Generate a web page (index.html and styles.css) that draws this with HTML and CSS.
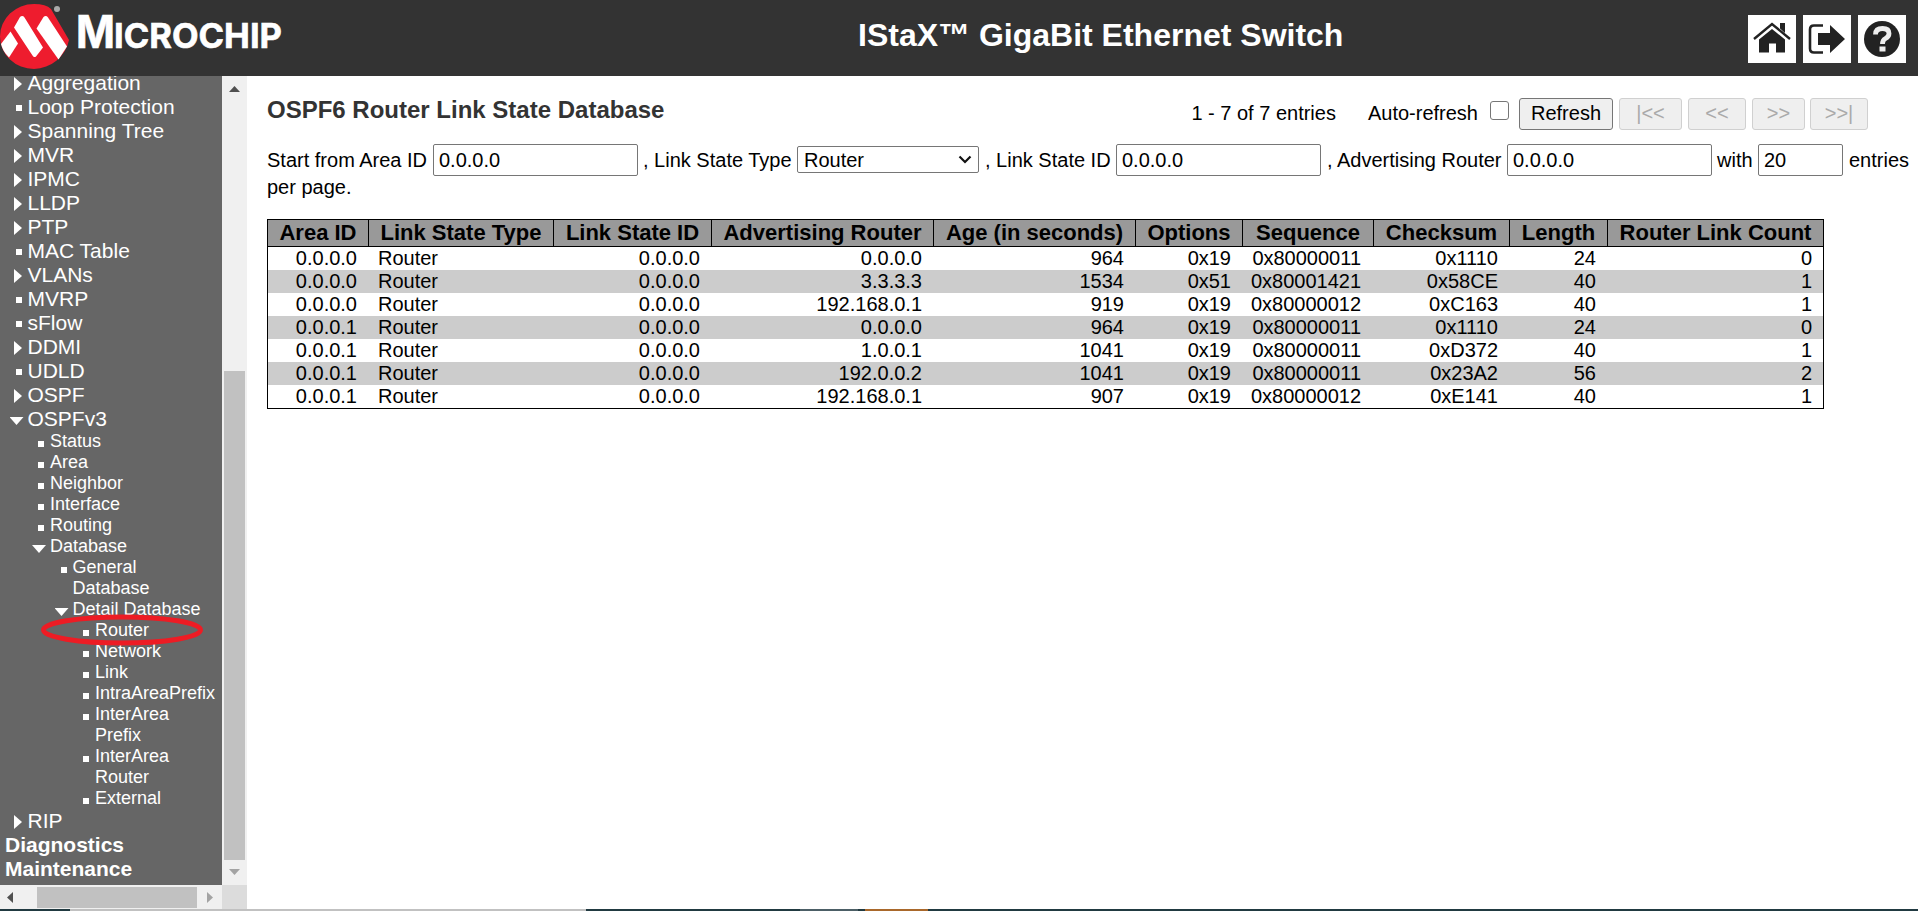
FILE: index.html
```html
<!DOCTYPE html>
<html lang="en">
<head>
<meta charset="utf-8">
<title>IStaX GigaBit Ethernet Switch</title>
<link rel="stylesheet" href="styles.css">
</head>
<body>
<header class="top">
  <div class="brand">
    <svg class="mark" width="70" height="72" viewBox="0 0 70 72">
      <path d="M34 4 A34 32.500 0 0 0 34 69 A37 36 0 0 0 69 40 L51 9 Q46 4 34 4 Z" fill="#ee1c2e"/>
      <path d="M10.500 31.500 L18 43.500 L9 57.500 Q2.500 51 1 44 Z" fill="#fff"/>
      <path d="M20 17 Q22.500 15 24.500 17.500 L43 47.500 L36 56.500 Q34 58 32.500 55.500 L14 27.500 Z" fill="#fff"/>
      <path d="M43.500 17 Q46 15 48 17.500 L67 46.500 L58.500 59.500 L36.500 28.500 Z" fill="#fff"/>
      <circle cx="57" cy="9" r="3" fill="#aaa"/>
    </svg>
    <svg class="wordmark" width="212" height="74" viewBox="0 0 212 74">
      <text class="word" x="-1" y="48" textLength="39" lengthAdjust="spacingAndGlyphs" font-size="45">M</text>
      <text class="word" x="37" y="48" textLength="168" lengthAdjust="spacingAndGlyphs" font-size="34">ICROCHIP</text>
    </svg>
  </div>
  <h1 class="product">IStaX™ GigaBit Ethernet Switch</h1>
  <div class="tools">
    <a class="tool"><svg width="48" height="48" viewBox="0 0 48 48"><path d="M32 8h5v10l-5-4.500z" fill="#222"/><path d="M6 24 24 9l18 15" fill="none" stroke="#222" stroke-width="2.400"/><path d="M11 24.500 24 14 37 24.500V37.500h-9v-9h-7v9H11z" fill="#222"/></svg></a>
    <a class="tool"><svg width="48" height="48" viewBox="0 0 48 48"><path d="M20 10.500h-9q-4 0-4 4v19q0 4 4 4h9" fill="none" stroke="#222" stroke-width="2.600"/><path d="M15 18h12V10l15 14-15 14v-8H15z" fill="#222"/></svg></a>
    <a class="tool"><svg width="48" height="48" viewBox="0 0 48 48"><circle cx="24" cy="24" r="18" fill="#222"/><path d="M17.500 19.500q0-6 7-6 6.500 0 6.500 5 0 3-3.500 5-3 1.700-3 5.500" fill="none" stroke="#eee" stroke-width="4.800"/><path d="M21.500 31.500h6v5h-6z" fill="#eee"/></svg></a>
  </div>
</header>
<div class="body">
  <div class="side">
    <nav class="menu">
      <ul class="l1">
        <li class="shut">Aggregation</li>
        <li class="leaf">Loop Protection</li>
        <li class="shut">Spanning Tree</li>
        <li class="shut">MVR</li>
        <li class="shut">IPMC</li>
        <li class="shut">LLDP</li>
        <li class="shut">PTP</li>
        <li class="leaf">MAC Table</li>
        <li class="shut">VLANs</li>
        <li class="leaf">MVRP</li>
        <li class="leaf">sFlow</li>
        <li class="shut">DDMI</li>
        <li class="leaf">UDLD</li>
        <li class="shut">OSPF</li>
        <li class="open">OSPFv3
          <ul class="sub">
            <li class="leaf">Status</li>
            <li class="leaf">Area</li>
            <li class="leaf">Neighbor</li>
            <li class="leaf">Interface</li>
            <li class="leaf">Routing</li>
            <li class="open">Database
              <ul class="sub">
                <li class="leaf">General<br>Database</li>
                <li class="open">Detail Database
                  <ul class="sub">
                    <li class="leaf">Router
                      <svg class="ring" width="164" height="34" viewBox="0 0 164 34"><ellipse cx="82" cy="17" rx="78.500" ry="13" fill="none" stroke="#ed1c24" stroke-width="5"/></svg>
                    </li>
                    <li class="leaf">Network</li>
                    <li class="leaf">Link</li>
                    <li class="leaf">IntraAreaPrefix</li>
                    <li class="leaf">InterArea<br>Prefix</li>
                    <li class="leaf">InterArea<br>Router</li>
                    <li class="leaf">External</li>
                  </ul>
                </li>
              </ul>
            </li>
          </ul>
        </li>
        <li class="shut">RIP</li>
      </ul>
      <div class="group">Diagnostics</div>
      <div class="group">Maintenance</div>
    </nav>
    <div class="vbar">
      <svg width="25" height="25" viewBox="0 0 25 25"><path d="M7 16h11l-5.500-6z" fill="#505050"/></svg>
      <div class="vthumb"></div>
      <svg width="25" height="25" viewBox="0 0 25 25"><path d="M7 9h11l-5.500 6z" fill="#a3a3a3"/></svg>
    </div>
    <div class="hbar">
      <svg width="25" height="24" viewBox="0 0 25 24"><path d="M13 7v11l-6-5.500z" fill="#505050"/></svg>
      <div class="hthumb"></div>
      <svg width="25" height="24" viewBox="0 0 25 24"><path d="M10 7v11l6-5.500z" fill="#a3a3a3"/></svg>
    </div>
    <div class="corner"></div>
  </div>
  <main class="main">
    <div class="headrow">
      <h2 class="title">OSPF6 Router Link State Database</h2>
      <div class="actions">
        <span class="count">1 - 7 of 7 entries</span>
        <label class="auto" for="auto">Auto-refresh</label>
        <input class="check" id="auto" type="checkbox">
        <button class="btn w94">Refresh</button>
        <button class="btn w63" disabled>|&lt;&lt;</button>
        <button class="btn w58" disabled>&lt;&lt;</button>
        <button class="btn w53" disabled>&gt;&gt;</button>
        <button class="btn w58 last" disabled>&gt;&gt;|</button>
      </div>
    </div>
    <div class="filter">
      <span class="f1">Start from Area ID</span><input class="field" value="0.0.0.0">
      <span class="f2">, Link State Type</span><span class="select">Router<svg width="14" height="10" viewBox="0 0 14 10"><path d="M1.500 1.500 7 7l5.500-5.500" fill="none" stroke="#111" stroke-width="2.200"/></svg></span>
      <span class="f3">, Link State ID</span><input class="field" value="0.0.0.0">
      <span class="f4">, Advertising Router</span><input class="field" value="0.0.0.0">
      <span class="f5">with</span><input class="field short" value="20">
      <span class="f6">entries</span>
    </div>
    <div class="perpage">per page.</div>
    <table class="db">
      <colgroup><col style="width:101px"><col style="width:185px"><col style="width:158px"><col style="width:222px"><col style="width:202px"><col style="width:107px"><col style="width:131px"><col style="width:136px"><col style="width:98px"><col style="width:215px"></colgroup>
      <thead><tr><th>Area ID</th><th>Link State Type</th><th>Link State ID</th><th>Advertising Router</th><th>Age (in seconds)</th><th>Options</th><th>Sequence</th><th>Checksum</th><th>Length</th><th>Router Link Count</th></tr></thead>
      <tbody>
        <tr><td>0.0.0.0</td><td class="txt">Router</td><td>0.0.0.0</td><td>0.0.0.0</td><td>964</td><td>0x19</td><td>0x80000011</td><td>0x1110</td><td>24</td><td>0</td></tr>
        <tr><td>0.0.0.0</td><td class="txt">Router</td><td>0.0.0.0</td><td>3.3.3.3</td><td>1534</td><td>0x51</td><td>0x80001421</td><td>0x58CE</td><td>40</td><td>1</td></tr>
        <tr><td>0.0.0.0</td><td class="txt">Router</td><td>0.0.0.0</td><td>192.168.0.1</td><td>919</td><td>0x19</td><td>0x80000012</td><td>0xC163</td><td>40</td><td>1</td></tr>
        <tr><td>0.0.0.1</td><td class="txt">Router</td><td>0.0.0.0</td><td>0.0.0.0</td><td>964</td><td>0x19</td><td>0x80000011</td><td>0x1110</td><td>24</td><td>0</td></tr>
        <tr><td>0.0.0.1</td><td class="txt">Router</td><td>0.0.0.0</td><td>1.0.0.1</td><td>1041</td><td>0x19</td><td>0x80000011</td><td>0xD372</td><td>40</td><td>1</td></tr>
        <tr><td>0.0.0.1</td><td class="txt">Router</td><td>0.0.0.0</td><td>192.0.0.2</td><td>1041</td><td>0x19</td><td>0x80000011</td><td>0x23A2</td><td>56</td><td>2</td></tr>
        <tr><td>0.0.0.1</td><td class="txt">Router</td><td>0.0.0.0</td><td>192.168.0.1</td><td>907</td><td>0x19</td><td>0x80000012</td><td>0xE141</td><td>40</td><td>1</td></tr>
      </tbody>
    </table>
  </main>
</div>
<div class="strip"></div>
</body>
</html>
```
FILE: styles.css
```css
* { box-sizing: border-box; }
body {
  margin: 0; width: 1918px; height: 911px; overflow: hidden; background: #fff; color: #000;
  font: 20px/23px "Liberation Sans", Arial, sans-serif;
  display: flex; flex-direction: column;
}
.top { height: 76px; flex: none; background: #333; color: #fff; display: grid; grid-template-columns: 858px 1fr 170px; }
.brand { display: flex; }
.mark { flex: none; }
.wordmark { margin-left: 7px; overflow: visible; }
.word { fill: #fff; stroke: #fff; stroke-width: 0.6; font-family: Inter, sans-serif; font-weight: 700; }
.product { margin: 17px 0 0; font-size: 32px; line-height: 37px; font-weight: bold; white-space: nowrap; }
.tools { display: flex; gap: 7px; padding-top: 15px; }
.tool { width: 48px; height: 48px; background: #fff; }
.tool svg { display: block; }
.body { height: 833px; flex: none; display: flex; }
.side { width: 247px; flex: none; display: grid; grid-template-columns: 222px 25px; grid-template-rows: 809px 24px; }
.menu { background: #666; color: #fff; overflow: hidden; font-size: 21px; line-height: 24px; padding-left: 5px; }
.menu ul { list-style: none; margin: 0; padding: 0; }
.menu .l1 { margin-top: -5px; padding-left: 22.500px; white-space: nowrap; }
.menu .sub { font-size: 18px; line-height: 21px; padding-left: 22.500px; }
.menu li { position: relative; }
.menu li::before { content: ""; position: absolute; background: #fff; }
.menu .leaf::before { width: 6px; height: 6px; left: -11.500px; top: 10px; }
.menu .sub .leaf::before { left: -12px; top: 10px; }
.menu .shut::before { width: 8px; height: 14px; left: -13.500px; top: 6px; clip-path: polygon(0 0, 100% 50%, 0 100%); }
.menu .open::before { width: 14px; height: 8px; left: -18px; top: 10px; clip-path: polygon(0 0, 100% 0, 50% 100%); }
.menu .sub .open::before { top: 9px; }
.ring { position: absolute; left: -55.500px; top: -7px; z-index: 2; }
.group { font-weight: bold; }
.vbar { background: #f0f0f0; display: flex; flex-direction: column; justify-content: space-between; }
.vthumb { width: 21px; height: 489px; margin: 270px 0 0 2px; background: #c1c1c1; }
.hbar { background: #f0f0f0; display: flex; }
.hbar svg { flex: none; }
.hthumb { flex: none; width: 160px; height: 21px; margin: 2px 0 0 12px; background: #c1c1c1; }
.corner { background: #dcdcdc; }
.main { flex: 1; min-width: 0; padding-left: 20px; }
.headrow { display: flex; justify-content: space-between; padding: 20px 50px 0 0; height: 68px; }
.title { margin: 0; font-size: 24px; line-height: 28px; font-weight: bold; color: #333; white-space: nowrap; }
.actions { display: flex; padding-top: 2px; white-space: nowrap; }
.count { margin: 4px 32px 0 0; }
.auto { margin-top: 4px; }
.check { appearance: none; width: 19px; height: 19px; margin: 3px 10px 0 12px; border: 1px solid #767676; border-radius: 3px; background: #fff; }
.btn { height: 32px; margin: 0 0 0 6px; padding: 0 0 2px; border: 1px solid #767676; border-radius: 3px; background: #efefef; color: #000; font: 20px/23px "Liberation Sans", Arial, sans-serif; }
.btn:disabled { color: #aaa; border-color: #d0d0d0; }
.btn.w94 { width: 94px; margin-left: 0; }
.btn.last { margin-left: 5px; }
.w63 { width: 63px; }
.w58 { width: 58px; }
.w53 { width: 53px; }
.filter { display: flex; height: 32px; line-height: 32px; white-space: nowrap; }
.filter span { flex: none; }
.field { flex: none; width: 205px; height: 32px; border: 1px solid #767676; border-radius: 2px; padding: 0 5px; font: 20px/28px "Liberation Sans", Arial, sans-serif; color: #000; }
.field.short { width: 85px; }
.f1 { width: 166px; }
.f2 { width: 159px; padding-left: 5px; }
.f3 { width: 137px; padding-left: 6px; }
.f4 { width: 186px; padding-left: 6px; }
.f5 { width: 46px; padding-left: 5px; }
.f6 { padding-left: 6px; }
.select { width: 182px; height: 27px; margin-top: 2px; border: 1px solid #767676; border-radius: 2px; padding: 0 6px; line-height: 26px; display: flex; justify-content: space-between; align-items: center; }
.perpage { height: 43px; }
.db { border-collapse: separate; border-spacing: 0; table-layout: fixed; width: 1557px; border: 1px solid #000; width: 1556px; }
.db th { background: #999; border: solid #000; border-width: 0 1px 1px 0; font-size: 22px; line-height: 25px; height: 27px; padding: 0 0 1px; white-space: nowrap; }
.db th:last-child { border-right: 0; }
.db td { height: 23px; line-height: 23px; padding: 0 12px 0 0; text-align: right; }
.db td:nth-child(7) { padding-right: 13px; }
.db td:last-child { padding-right: 11px; }
.db .txt { text-align: left; padding-left: 9px; }
.db tbody tr:nth-child(even) { background: #ccc; }
.strip { height: 2px; flex: none; background: linear-gradient(90deg, #213a41 0 70px, #c1c1c1 70px 586px, #213a41 586px 800px, #4c5f66 800px 858px, #213a41 858px 865px, #a9682b 865px 928px, #213a41 928px); }
```
